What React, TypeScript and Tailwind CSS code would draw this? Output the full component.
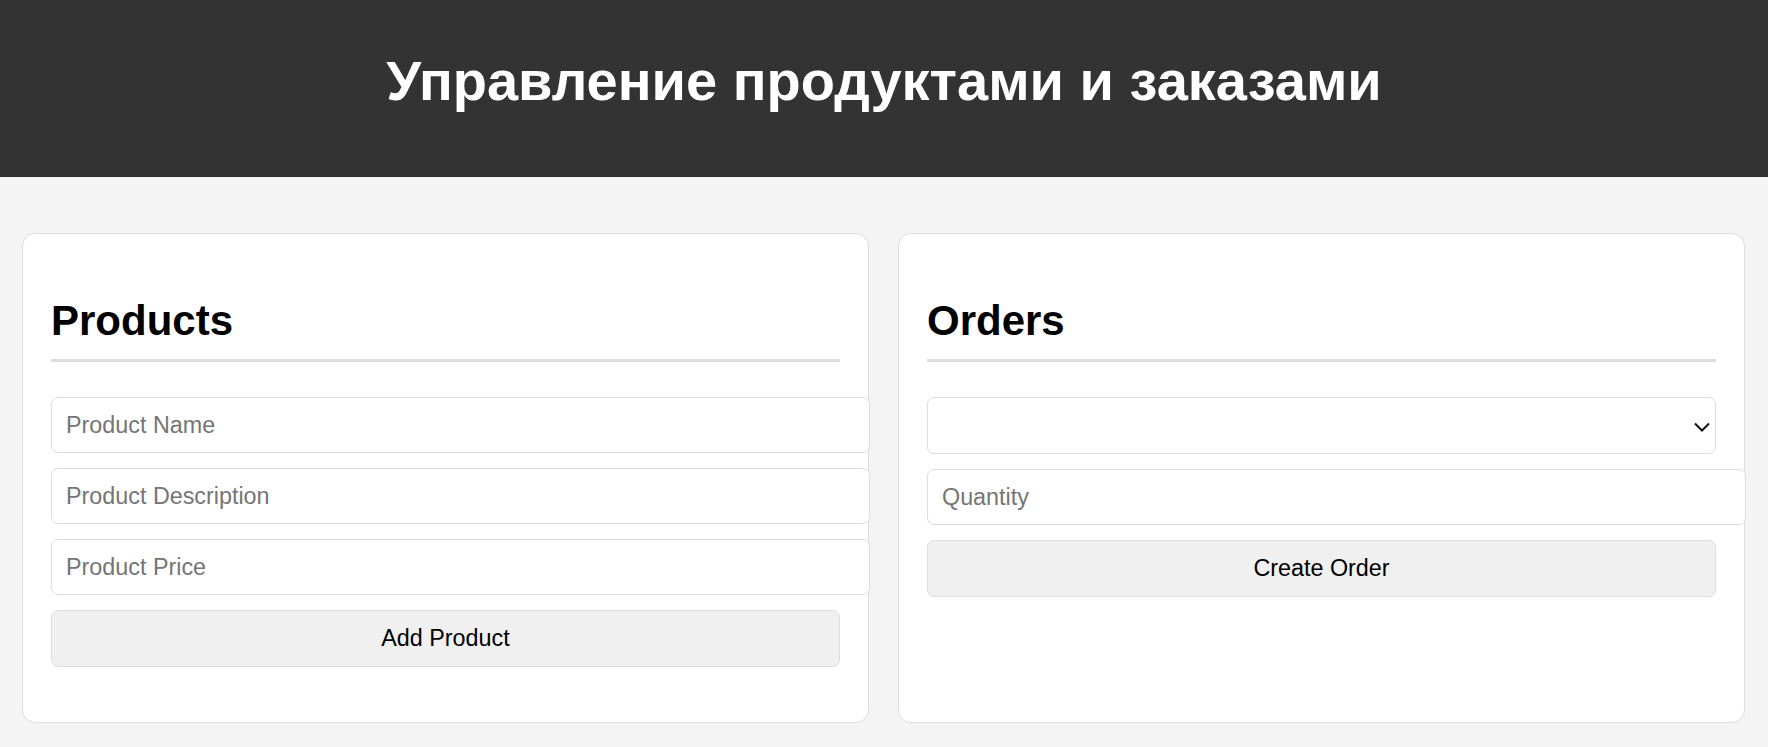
import React from "react";

const inputCls =
  "block box-border w-[calc(100%+30px)] h-[56px] px-[14px] mb-[15px] bg-white border border-[#dddddd] rounded-[7px] text-[23.33px] text-black placeholder:text-[#757575] outline-none";

const buttonCls =
  "block w-full h-[57px] bg-[#f0f0f0] border border-[#dddddd] rounded-[7px] text-[23.33px] text-black text-center";

function Card({ title, children }: { title: string; children: React.ReactNode }) {
  return (
    <section className="flex-1 basis-0 min-w-0 bg-white border border-[#dddddd] rounded-[13px] px-[28px] pt-[28px] pb-[55px]">
      <h2 className="mt-[35px] mb-[35px] pb-[14px] border-b-[3px] border-[#dddddd] text-[42px] leading-[48px] font-bold text-black">
        {title}
      </h2>
      {children}
    </section>
  );
}

export default function App() {
  return (
    <div className="min-h-screen bg-[#f4f4f4] font-['Liberation_Sans',Arial,sans-serif]">
      {/* Header */}
      <header className="h-[177px] bg-[#333333] pt-[49px]">
        <h1 className="text-center text-white text-[56px] leading-[64px] font-bold">
          Управление продуктами и заказами
        </h1>
      </header>

      <main className="flex items-stretch gap-[29px] pl-[22px] pr-[23px] pt-[56px]">
        {/* Products */}
        <Card title="Products">
          <input className={inputCls} placeholder="Product Name" />
          <input className={inputCls} placeholder="Product Description" />
          <input className={inputCls} placeholder="Product Price" />
          <button className={buttonCls}>Add Product</button>
        </Card>

        {/* Orders */}
        <Card title="Orders">
          <div className="relative mb-[15px]">
            <select className="block w-full h-[57px] px-[14px] appearance-none bg-white border border-[#dddddd] rounded-[7px] text-[23.33px] text-black outline-none">
              <option value=""></option>
            </select>
            <svg
              className="pointer-events-none absolute right-[6px] top-[25px] w-[16px] h-[10px]"
              viewBox="0 0 16 10"
              fill="none"
              stroke="#111"
              strokeWidth="2"
            >
              <path d="M1 1.5 L8 8.5 L15 1.5" />
            </svg>
          </div>
          <input className={inputCls} placeholder="Quantity" />
          <button className={buttonCls}>Create Order</button>
        </Card>
      </main>
    </div>
  );
}
